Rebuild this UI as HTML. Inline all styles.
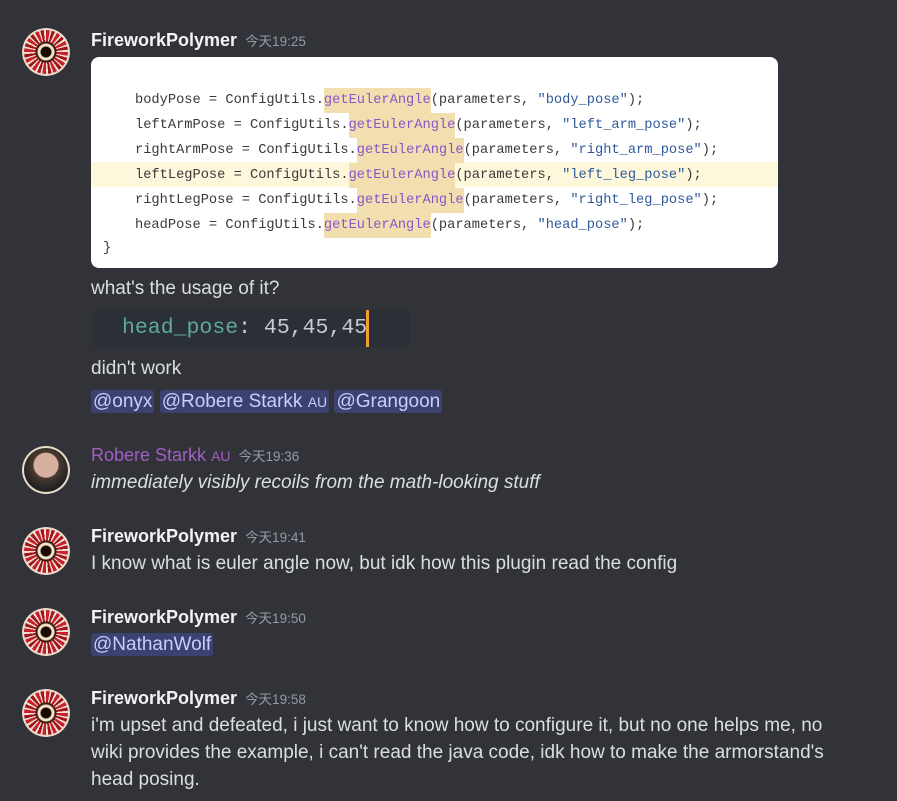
<!DOCTYPE html>
<html><head><meta charset="utf-8"><style>
body{margin:0;width:897px;height:801px;background:#313338;font-family:"Liberation Sans","Noto Sans CJK SC",sans-serif;color:#dbdee1;overflow:hidden;position:relative}
.a{position:absolute;left:22px;width:48px;height:48px;border-radius:50%;background:radial-gradient(circle,#1a0a05 0 5px,#f3e2c8 6px 8px,#3a1a10 9px 10px,transparent 11px),repeating-conic-gradient(#c8202a 0 10deg,#e8d8d0 10deg 15deg,#a0141c 15deg 24deg,#f0e0d0 24deg 30deg);box-shadow:inset 0 0 0 2px #e9dccb}
.n{position:absolute;left:91px;font-size:18px;font-weight:bold;color:#f2f3f5;line-height:22px}
.n span{font-size:13.5px;font-weight:normal;color:#949ba4;margin-left:8px}
.t{position:absolute;left:91px;font-size:19px;line-height:27px;white-space:nowrap}
.m{background:#3c4270;color:#c9cdfb;border-radius:3px;padding:1px 2px}
.code{position:absolute;left:91px;top:57px;width:687px;height:211px;background:#fff;border-radius:8px;font-family:"Liberation Mono",monospace;font-size:13.7px;color:#3a3a3a;overflow:hidden}
.l{position:absolute;left:44px;height:25px;line-height:25px;white-space:pre;top:0}
.g{color:#8a55c8;background:#f2dfb0;display:inline-block;height:25px}
.s{color:#2f5a9a}
</style></head><body>
<div class="a" style="top:28px"></div>
<div class="n" style="top:29px">FireworkPolymer<span>今天19:25</span></div>
<div class="code">
<div style="position:absolute;left:0;top:105px;width:687px;height:25px;background:#fdf8dc"></div>
<div class="l" style="top:31px">bodyPose = ConfigUtils.<span class="g">getEulerAngle</span>(parameters, <span class="s">"body_pose"</span>);</div>
<div class="l" style="top:56px">leftArmPose = ConfigUtils.<span class="g">getEulerAngle</span>(parameters, <span class="s">"left_arm_pose"</span>);</div>
<div class="l" style="top:81px">rightArmPose = ConfigUtils.<span class="g">getEulerAngle</span>(parameters, <span class="s">"right_arm_pose"</span>);</div>
<div class="l" style="top:106px">leftLegPose = ConfigUtils.<span class="g">getEulerAngle</span>(parameters, <span class="s">"left_leg_pose"</span>);</div>
<div class="l" style="top:131px">rightLegPose = ConfigUtils.<span class="g">getEulerAngle</span>(parameters, <span class="s">"right_leg_pose"</span>);</div>
<div class="l" style="top:156px">headPose = ConfigUtils.<span class="g">getEulerAngle</span>(parameters, <span class="s">"head_pose"</span>);</div>
<div class="l" style="top:179px;left:12px">}</div>
</div>
<div class="t" style="top:275px">what's the usage of it?</div>
<div style="position:absolute;left:91px;top:310px;width:319px;height:37px;background:#2b3036;border-radius:6px"></div>
<div style="position:absolute;left:122px;top:313px;font-family:'Liberation Mono',monospace;font-size:21.5px;line-height:30px;color:#c8ccd0;white-space:pre"><span style="color:#5fa8a0">head_pose</span>: 45,45,45</div>
<div style="position:absolute;left:366px;top:310px;width:3px;height:37px;background:#f0a030"></div>
<div class="t" style="top:355px">didn't work</div>
<div class="t" style="top:388px"><span class="m">@onyx</span> <span class="m">@Robere Starkk <small style="font-size:14px">AU</small></span> <span class="m">@Grangoon</span></div>

<div class="a" style="top:446px;background:radial-gradient(circle at 50% 40%,#d8b0a0 0 12px,#4a3a30 13px,#222 24px)"></div>
<div class="n" style="top:444px;color:#a25ec5;font-weight:normal">Robere Starkk <small style="font-size:14px">AU</small><span>今天19:36</span></div>
<div class="t" style="top:469px;font-style:italic">immediately visibly recoils from the math-looking stuff</div>

<div class="a" style="top:527px"></div>
<div class="n" style="top:525px">FireworkPolymer<span>今天19:41</span></div>
<div class="t" style="top:550px">I know what is euler angle now, but idk how this plugin read the config</div>

<div class="a" style="top:608px"></div>
<div class="n" style="top:606px">FireworkPolymer<span>今天19:50</span></div>
<div class="t" style="top:631px"><span class="m">@NathanWolf</span></div>

<div class="a" style="top:689px"></div>
<div class="n" style="top:687px">FireworkPolymer<span>今天19:58</span></div>
<div class="t" style="top:712px">i'm upset and defeated, i just want to know how to configure it, but no one helps me, no<br>wiki provides the example, i can't read the java code, idk how to make the armorstand's<br>head posing.</div>
</body></html>
